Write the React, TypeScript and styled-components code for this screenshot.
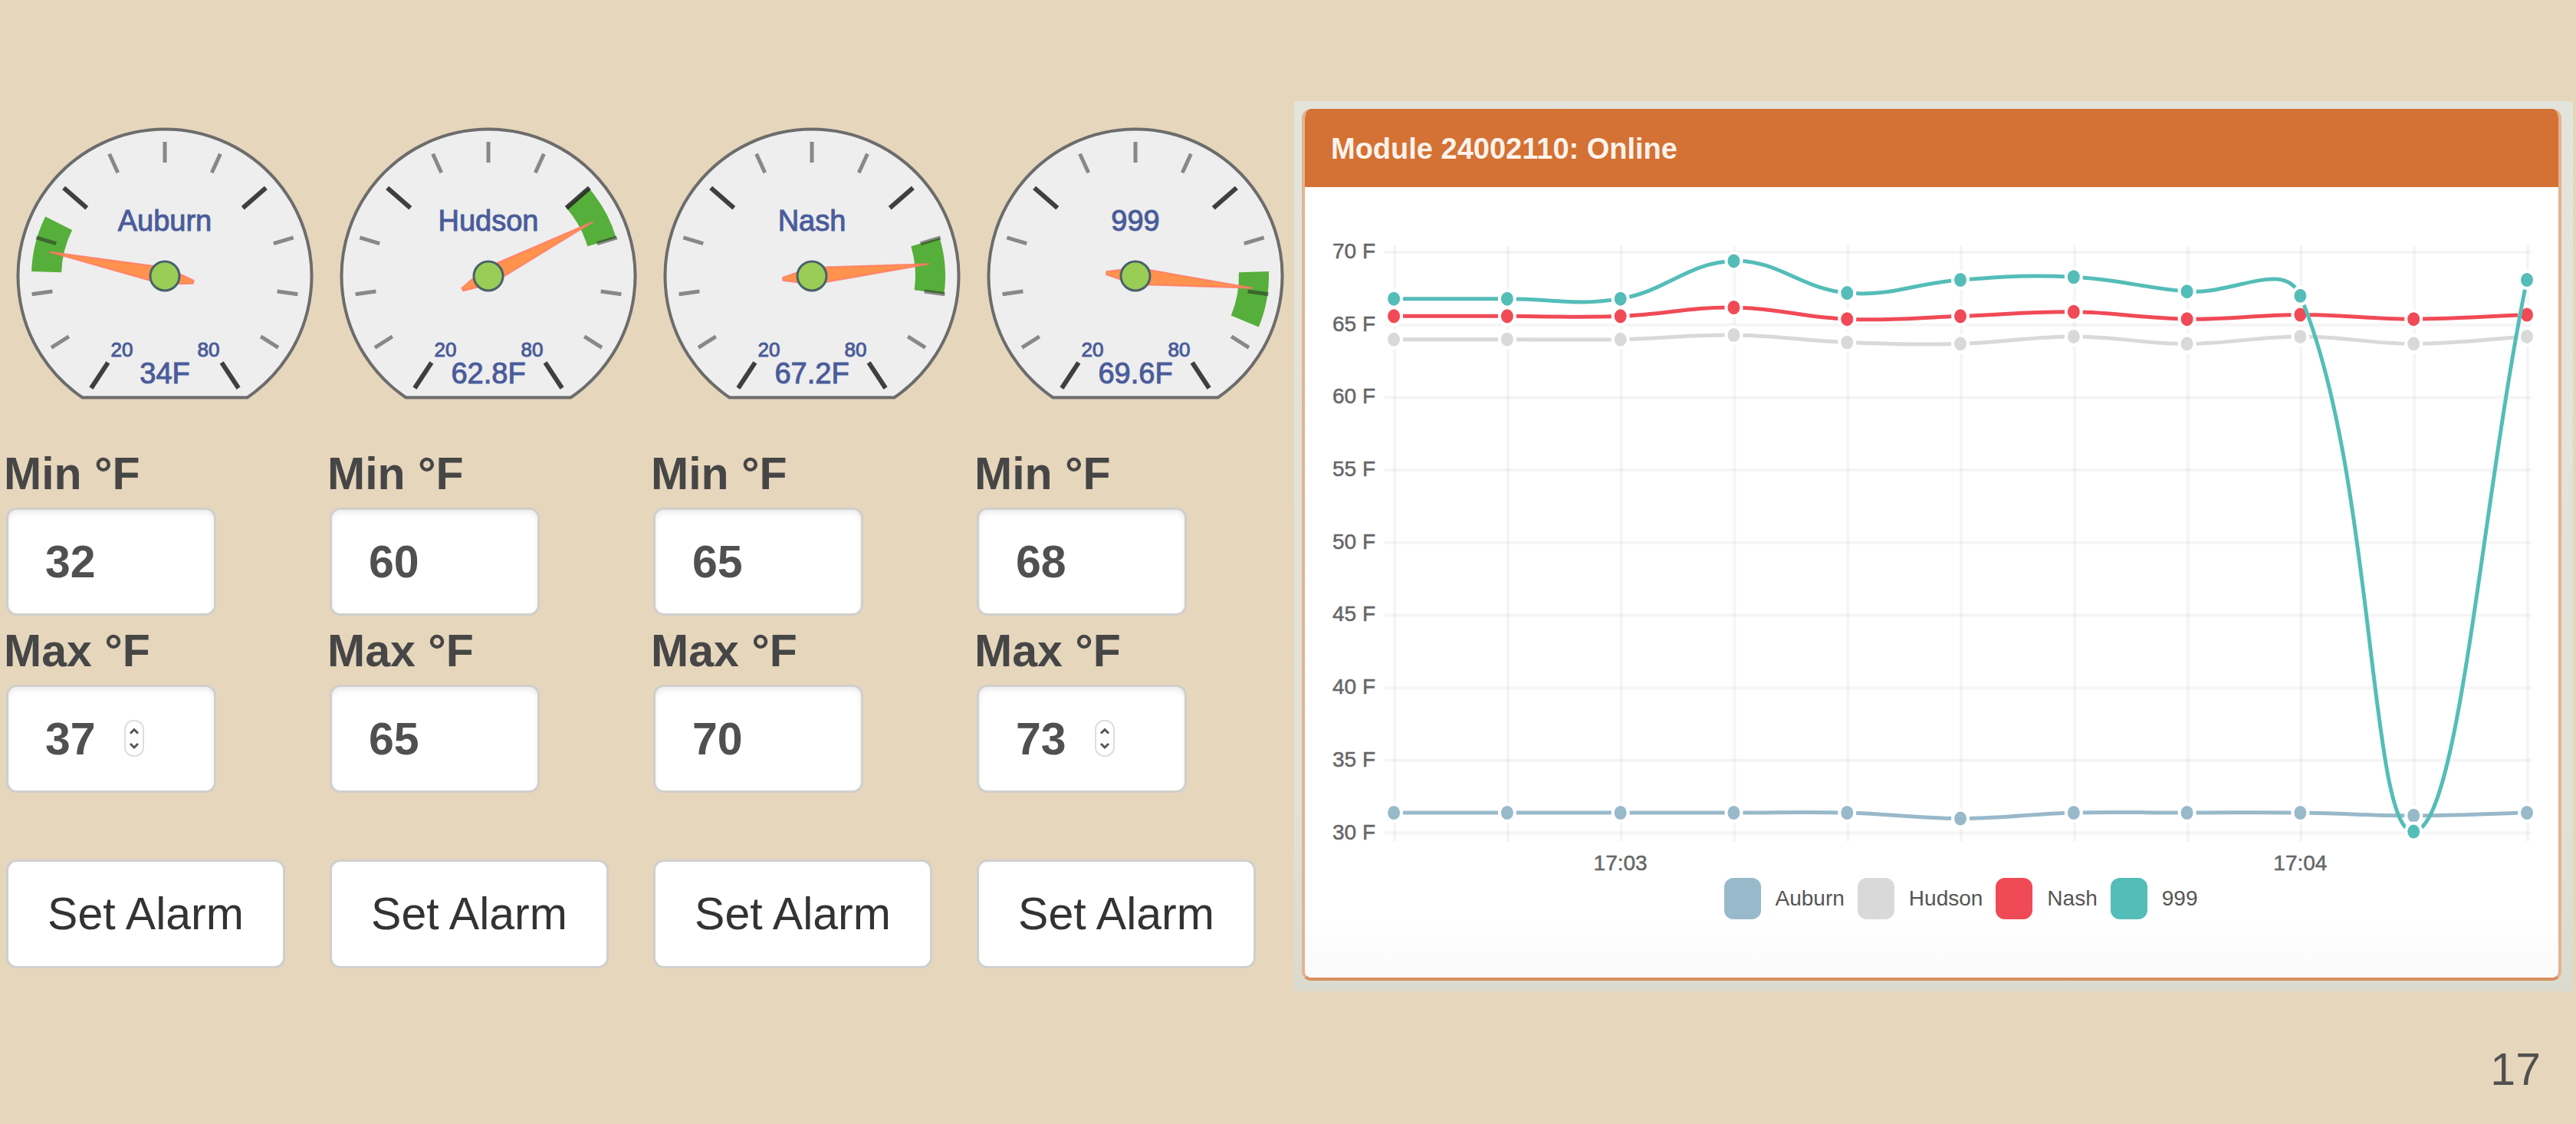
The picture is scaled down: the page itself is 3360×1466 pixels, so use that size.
import React, { useId, useState } from "react";
import styled, { createGlobalStyle } from "styled-components";

const GlobalStyle = createGlobalStyle`
  *, *::before, *::after { box-sizing: border-box; }
  body {
    margin: 0;
    background: #e6d6bc;
    color: #484848;
    font-family: "Liberation Sans", Arial, Helvetica, sans-serif;
    font-size: 59px;
  }
`;

const Page = styled.div`
  display: flex;
  flex-direction: column;
  padding-top: 132px;
`;

const Dashboard = styled.main`
  display: grid;
  grid-template-columns: minmax(0, 422fr) minmax(0, 417fr);
  align-items: start;
  padding-right: 4px;
`;

const SensorGrid = styled.section`
  display: grid;
  grid-template-columns: repeat(4, minmax(0, 1fr));
  padding-top: 34px;
`;

const Sensor = styled.form`
  display: flex;
  flex-direction: column;
  align-items: flex-start;
`;

const GaugeSvg = styled.svg`
  display: block;
  width: 100%;
  height: auto;
`;

const Fields = styled.div`
  display: flex;
  flex-direction: column;
  align-items: flex-start;
  width: 100%;
  padding-top: 66px;
  padding-left: 8px;
`;

const Field = styled.div`
  display: flex;
  flex-direction: column;
  align-items: flex-start;
  margin-bottom: 16px;
`;

const FieldLabel = styled.label`
  margin-bottom: 14px;
  margin-left: -3px;
  font-weight: bold;
  line-height: 60px;
  color: #464646;
`;

const InputWrap = styled.div`
  position: relative;
`;

const NumberInput = styled.input`
  display: block;
  width: 274px;
  height: 141px;
  padding: 0 48px;
  border: 3px solid #cfcfcd;
  border-radius: 14px;
  background: #fff;
  box-shadow: inset 0 4px 6px rgba(0, 0, 0, 0.08);
  color: #505050;
  font: inherit;
  font-weight: bold;
  appearance: textfield;
  &::-webkit-inner-spin-button { display: none; }
`;

const Spinner = styled.svg`
  position: absolute;
  top: 46px;
  left: 154px;
  width: 26px;
  height: 48px;
  pointer-events: none;
`;

const AlarmButton = styled.button`
  width: 364px;
  height: 142px;
  margin-top: 71px;
  padding: 0;
  border: 3px solid #cfcfcd;
  border-radius: 14px;
  background: #fff;
  color: #333;
  font: inherit;
`;

const CardFrame = styled.section`
  padding: 10px 15px 14px 10px;
  background: linear-gradient(#e3e4db, #e1e1d6 80%, #dbdace);
`;

const Card = styled.article`
  border: 4px solid #e5b390;
  border-top: 0;
  border-bottom-color: #d78f60;
  border-radius: 12px;
  overflow: hidden;
  background: linear-gradient(#fff 93%, #fafafb);
`;

const CardHeader = styled.h2`
  margin: 0 -4px;
  padding: 2px 38px 0;
  background: #d47134;
  color: #fdf3ec;
  font-size: 38px;
  font-weight: bold;
  line-height: 100px;
`;

const PlotSvg = styled.svg`
  display: block;
  width: 100%;
  height: auto;
`;

const Legend = styled.ul`
  display: flex;
  justify-content: center;
  gap: 17px;
  margin: 0;
  padding: 0 0 76px 76px;
  list-style: none;
`;

const LegendItem = styled.li`
  display: flex;
  align-items: center;
  gap: 19px;
  height: 54px;
  color: #555;
  font-size: 28px;
  line-height: 54px;
`;

const Swatch = styled.span<{ $color: string }>`
  width: 48px;
  height: 54px;
  border-radius: 12px;
  background: ${(p) => p.$color};
`;

const PageNumber = styled.footer`
  padding: 69px 46px 0 0;
  color: #505050;
  line-height: 66px;
  text-align: right;
`;

/* ---- gauges ---- */

type SensorData = {
  name: string;
  value: number;
  min: number;
  max: number;
  spinner?: boolean;
};

const sensors: SensorData[] = [
  { name: "Auburn", value: 34, min: 32, max: 37, spinner: true },
  { name: "Hudson", value: 62.8, min: 60, max: 65 },
  { name: "Nash", value: 67.2, min: 65, max: 70 },
  { name: "999", value: 69.6, min: 68, max: 73, spinner: true },
];

const CX = 215;
const CY = 194;
const SCALE_MIN = 20;
const SCALE_MAX = 80;
const START = 33.3;
const SWEEP = 360 - 2 * START;

// Angle is measured clockwise from straight down.
const angleOf = (v: number) =>
  START + ((v - SCALE_MIN) / (SCALE_MAX - SCALE_MIN)) * SWEEP;

const polar = (deg: number, r: number): [number, number] => {
  const a = (deg * Math.PI) / 180;
  return [CX - r * Math.sin(a), CY + r * Math.cos(a)];
};

const pt = (deg: number, r: number) =>
  polar(deg, r).map((n) => n.toFixed(2)).join(" ");

function Gauge({ name, value, min, max }: SensorData) {
  const a0 = angleOf(min);
  const a1 = angleOf(max);
  const band = `M${pt(a0, 174)} A174 174 0 0 1 ${pt(a1, 174)} L${pt(a1, 135)} A135 135 0 0 0 ${pt(a0, 135)}Z`;
  const a = angleOf(value);
  const needle = `M${pt(a, 154)} L${pt(a + 90, 11)} L${pt(a + 177, 38)} L${pt(a + 183, 38)} L${pt(a - 90, 11)}Z`;
  return (
    <GaugeSvg viewBox="0 0 422 356" role="img" aria-label={`${name} ${value}F`}>
      <path
        d="M107.5 352.5 A191.5 191.5 0 1 1 322.5 352.5 Z"
        fill="#eee"
        stroke="#6c6c6c"
        strokeWidth="4"
      />
      <path d={band} fill="#56ae3b" />
      {Array.from({ length: 13 }, (_, i) => {
        const major = i % 4 === 0;
        const deg = START + (SWEEP * i) / 12;
        const [x1, y1] = polar(deg, 175);
        const [x2, y2] = polar(deg, major ? 135 : 148);
        return (
          <line
            key={i}
            x1={x1}
            y1={y1}
            x2={x2}
            y2={y2}
            stroke="#222"
            strokeOpacity={major ? 0.86 : 0.5}
            strokeWidth={major ? 6 : 5}
          />
        );
      })}
      <g fill="#4a5c9a" stroke="#4a5c9a" strokeWidth="1" textAnchor="middle">
        <text x={CX} y="135" fontSize="38">{name}</text>
        <text x={CX - 56} y="299" fontSize="26">20</text>
        <text x={CX + 57} y="299" fontSize="26">80</text>
        <text x={CX} y="334" fontSize="38">{value}F</text>
      </g>
      <path
        d={needle}
        fill="#ff8c45"
        fillOpacity="0.95"
        stroke="#ff7868"
        strokeOpacity="0.8"
        strokeWidth="2"
      />
      <circle cx={CX} cy={CY} r="19" fill="#9acd55" stroke="#4a606c" strokeWidth="3" />
    </GaugeSvg>
  );
}

function TemperatureField(props: { label: string; initial: number; spinner?: boolean }) {
  const id = useId();
  const [value, setValue] = useState(String(props.initial));
  return (
    <Field>
      <FieldLabel htmlFor={id}>{props.label}</FieldLabel>
      <InputWrap>
        <NumberInput
          id={id}
          type="number"
          value={value}
          onChange={(e) => setValue(e.target.value)}
        />
        {props.spinner && (
          <Spinner viewBox="0 0 26 48" aria-hidden="true">
            <rect x="1" y="1" width="24" height="46" rx="11" fill="#fff" stroke="#dedede" strokeWidth="2" />
            <path
              d="M8 17.5 L13 12.5 L18 17.5 M8 31 L13 36 L18 31"
              fill="none"
              stroke="#555"
              strokeWidth="3"
            />
          </Spinner>
        )}
      </InputWrap>
    </Field>
  );
}

/* ---- chart ---- */

const series = [
  { name: "Auburn", color: "#98b9ca", data: [31.4, 31.4, 31.4, 31.4, 31.4, 31, 31.4, 31.4, 31.4, 31.2, 31.4] },
  { name: "Hudson", color: "#d9d9d9", data: [64, 64, 64, 64.3, 63.8, 63.7, 64.2, 63.7, 64.2, 63.7, 64.2] },
  { name: "Nash", color: "#f04a56", data: [65.6, 65.6, 65.6, 66.2, 65.4, 65.6, 65.9, 65.4, 65.7, 65.4, 65.7] },
  { name: "999", color: "#54bdb8", data: [66.8, 66.8, 66.8, 69.4, 67.2, 68.1, 68.3, 67.3, 67, 30.1, 68.1] },
];

// Plot area in the coordinates of the chart's viewBox.
const LEFT = 116;
const RIGHT = 1593;
const TOP = 85;
const BOTTOM = 842;
const xOf = (i: number) => LEFT + ((RIGHT - LEFT) * i) / 10;
const yOf = (v: number) => BOTTOM - ((v - 30) / 40) * (BOTTOM - TOP);
const clampY = (y: number) => Math.min(BOTTOM, Math.max(TOP, y));

// Smooth curve whose handles are shared out by the distance to each neighbour.
function curve(data: number[]) {
  const p = data.map((v, i) => ({ x: xOf(i), y: yOf(v) }));
  const handles = p.map((c, i) => {
    const a = p[i - 1] ?? c;
    const b = p[i + 1] ?? c;
    const da = Math.hypot(c.x - a.x, c.y - a.y);
    const db = Math.hypot(b.x - c.x, b.y - c.y);
    const fa = (0.4 * da) / (da + db);
    const fb = (0.4 * db) / (da + db);
    return {
      inX: c.x - fa * (b.x - a.x),
      inY: clampY(c.y - fa * (b.y - a.y)),
      outX: c.x + fb * (b.x - a.x),
      outY: clampY(c.y + fb * (b.y - a.y)),
    };
  });
  return p
    .map((c, i) =>
      i === 0
        ? `M${c.x} ${c.y}`
        : `C${handles[i - 1].outX} ${handles[i - 1].outY} ${handles[i].inX} ${handles[i].inY} ${c.x} ${c.y}`
    )
    .join(" ");
}

function TemperatureChart() {
  const ticks = [70, 65, 60, 55, 50, 45, 40, 35, 30];
  return (
    <PlotSvg viewBox="0 0 1634 900" role="img" aria-label="Temperature history">
      <g stroke="#000" strokeOpacity="0.04" strokeWidth="4">
        {ticks.map((t) => (
          <line key={t} x1={LEFT - 12} x2={RIGHT + 6} y1={yOf(t)} y2={yOf(t)} />
        ))}
        {series[0].data.map((_, i) => (
          <line key={i} x1={xOf(i) + 1} x2={xOf(i) + 1} y1={TOP - 9} y2={BOTTOM + 11} />
        ))}
      </g>
      <g fill="#666" stroke="#666" strokeWidth="0.5" fontSize="28">
        {ticks.map((t) => (
          <text key={t} x="92" y={yOf(t) + 8} textAnchor="end">{t} F</text>
        ))}
        <text x={xOf(2)} y="890" textAnchor="middle">17:03</text>
        <text x={xOf(8)} y="890" textAnchor="middle">17:04</text>
      </g>
      {series.map((s) => (
        <g key={s.name}>
          <path d={curve(s.data)} fill="none" stroke={s.color} strokeWidth="5" />
          {s.data.map((v, i) => (
            <ellipse
              key={i}
              cx={xOf(i)}
              cy={yOf(v)}
              rx="10"
              ry="11"
              fill={s.color}
              stroke="#fff"
              strokeWidth="4"
            />
          ))}
        </g>
      ))}
    </PlotSvg>
  );
}

export default function App() {
  return (
    <>
      <GlobalStyle />
      <Page>
        <Dashboard>
          <SensorGrid>
            {sensors.map((s) => (
              <Sensor key={s.name} onSubmit={(e) => e.preventDefault()}>
                <Gauge {...s} />
                <Fields>
                  <TemperatureField label="Min °F" initial={s.min} />
                  <TemperatureField label="Max °F" initial={s.max} spinner={s.spinner} />
                  <AlarmButton type="submit">Set Alarm</AlarmButton>
                </Fields>
              </Sensor>
            ))}
          </SensorGrid>
          <CardFrame>
            <Card>
              <CardHeader>Module 24002110: Online</CardHeader>
              <TemperatureChart />
              <Legend>
                {series.map((s) => (
                  <LegendItem key={s.name}>
                    <Swatch $color={s.color} />
                    {s.name}
                  </LegendItem>
                ))}
              </Legend>
            </Card>
          </CardFrame>
        </Dashboard>
        <PageNumber>17</PageNumber>
      </Page>
    </>
  );
}
